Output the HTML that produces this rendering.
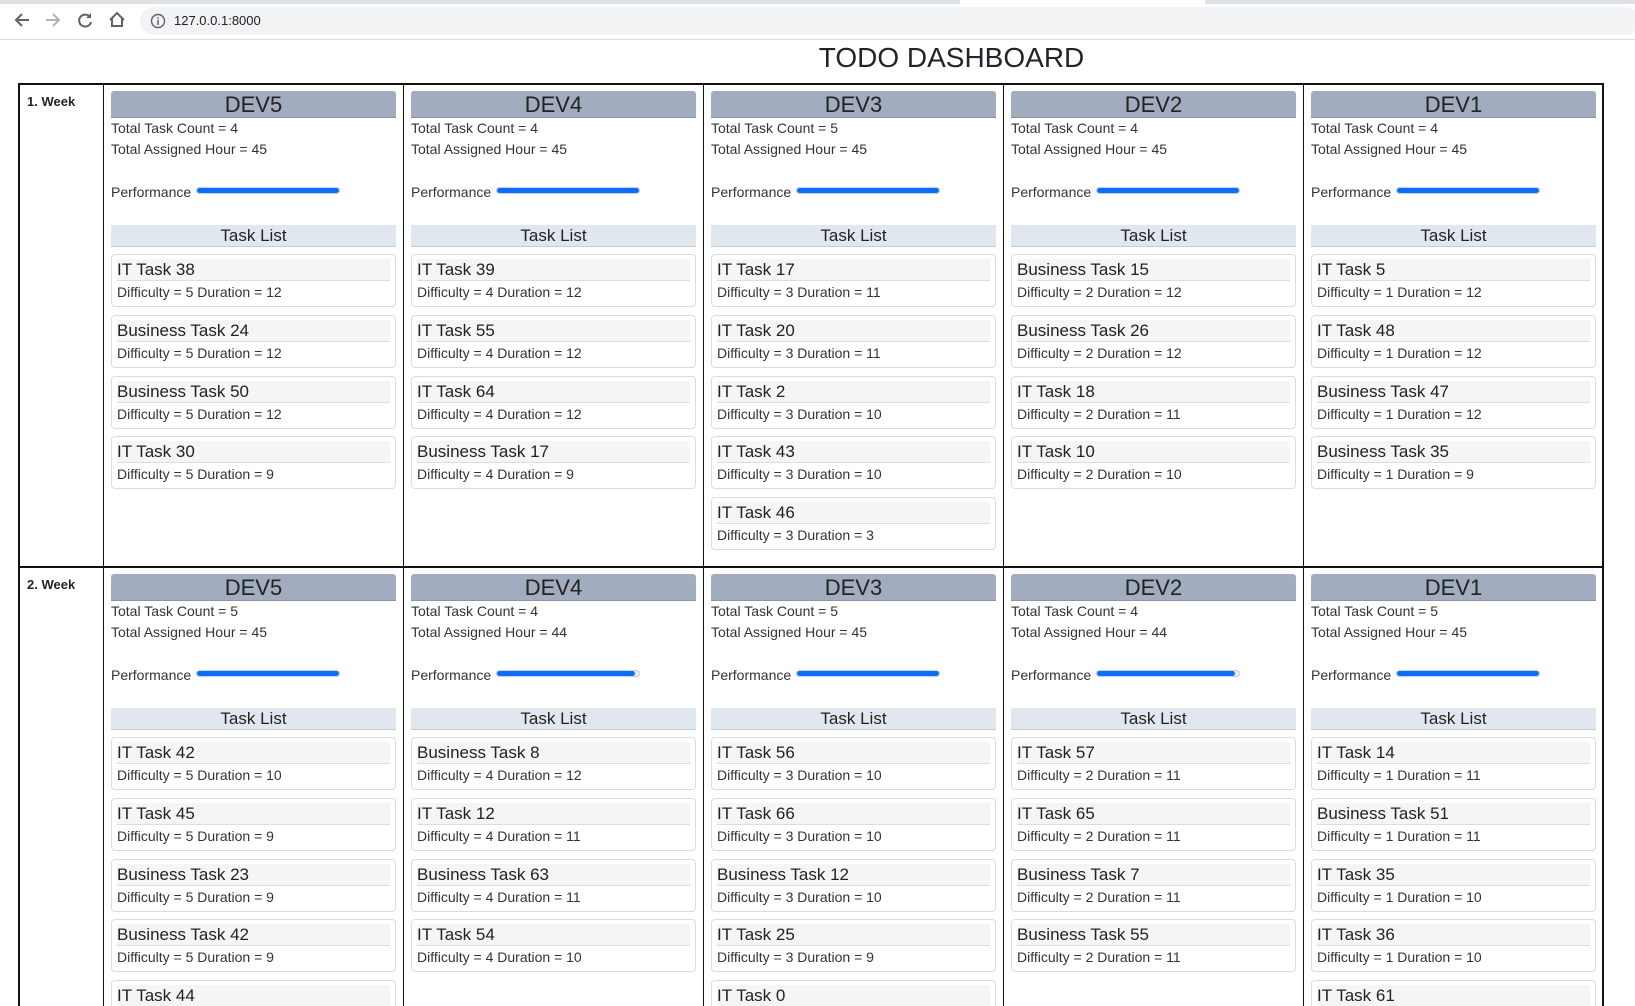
<!DOCTYPE html>
<html style="height:1006px;overflow:hidden"><head><meta charset="utf-8"><style>
*{box-sizing:border-box;margin:0;padding:0}
body{width:1635px;height:1006px;overflow:hidden;background:#fff;font-family:"Liberation Sans",sans-serif;color:#212529;position:relative}
.strip{position:absolute;left:0;top:0;width:1635px;height:4px;background:#dee1e6}
.tab{position:absolute;left:960px;top:0;width:245px;height:4px;background:#fff}
.bar{position:absolute;left:0;top:4px;width:1635px;height:36px;background:#fff;border-bottom:1px solid #dadce0}
.pill{position:absolute;left:140px;top:7px;width:1500px;height:28px;border-radius:14px;background:#f1f3f4}
.url{position:absolute;left:174px;top:13px;font-size:13px;color:#202124}
.ic{position:absolute;top:9px}
h1{position:absolute;left:0;width:1903px;top:42px;text-align:center;font-size:28px;font-weight:normal;color:#212529}
.tbl{position:absolute;left:18px;top:83px;width:1586px;height:930px;border:2px solid #111;border-bottom:none}
.vl{position:absolute;top:83px;width:1px;height:930px;background:#111}
.hl{position:absolute;left:18px;top:566px;width:1586px;height:2px;background:#111}
.wk{position:absolute;left:27px;font-size:13px;font-weight:bold}
.cell{position:absolute;width:285px}
.dh{height:27px;background:#a1adbe;border-radius:3px 3px 0 0;border-bottom:1px solid #8994a5;text-align:center;font-size:22px;line-height:28px;color:#222}
.st{font-size:14px;line-height:21px;color:#333}
.pf{margin-top:22px;height:20px;font-size:14px;line-height:20px;color:#333;position:relative}
.pb{position:absolute;left:85px;top:5px;width:144px;height:7px;border-radius:4px;background:#e9ecef;border:1px solid #c9d0dc}
.pb i{display:block;height:5px;background:#0d6efd;border-radius:3px;width:100%}
.tl{margin-top:23px;height:22px;background:#e1e7ef;border-bottom:1px solid #c5ccd6;text-align:center;font-size:17px;line-height:22px;color:#222}
.cards{margin-top:7px}
.cd{height:53px;border:1px solid #dcdcdc;border-radius:4px;padding:4px 5px 0;margin-bottom:7.75px}
.ct{height:22px;background:#f5f5f5;border-bottom:1px solid #ddd;font-size:17px;line-height:22px;color:#222}
.cdf{font-size:14px;line-height:23px;color:#333}
</style></head><body>
<div class="strip"></div><div class="tab"></div>
<div class="bar"></div>
<svg class="ic" style="left:12px" width="20" height="22" viewBox="0 0 20 22"><path d="M17 11H4M10 5l-6 6 6 6" stroke="#5f6368" stroke-width="2" fill="none"/></svg>
<svg class="ic" style="left:43px" width="20" height="22" viewBox="0 0 20 22"><path d="M3 11h13M10 5l6 6-6 6" stroke="#b0b3b8" stroke-width="2" fill="none"/></svg>
<svg class="ic" style="left:75px" width="20" height="22" viewBox="0 0 20 22"><path d="M15 8a6 6 0 1 0 1 5" stroke="#5f6368" stroke-width="2" fill="none"/><path d="M16 4v5h-5z" fill="#5f6368"/></svg>
<svg class="ic" style="left:107px" width="20" height="22" viewBox="0 0 20 22"><path d="M3 11l7-7 7 7M5 9v8h10V9" stroke="#5f6368" stroke-width="2" fill="none"/></svg>
<div class="pill"></div>
<svg class="ic" style="left:150px;top:13px" width="16" height="16" viewBox="0 0 16 16"><circle cx="8" cy="8" r="6.5" stroke="#5f6368" stroke-width="1.4" fill="none"/><path d="M8 7v5M8 4.5v1.5" stroke="#5f6368" stroke-width="1.5"/></svg>
<div class="url">127.0.0.1:8000</div>
<h1>TODO DASHBOARD</h1>
<div class="tbl"></div>
<div class="vl" style="left:103px"></div><div class="vl" style="left:403px"></div><div class="vl" style="left:703px"></div><div class="vl" style="left:1003px"></div><div class="vl" style="left:1303px"></div>
<div class="hl"></div>
<div class="wk" style="top:94px">1. Week</div>
<div class="wk" style="top:577px">2. Week</div>

<div class="cell" style="left:111px;top:91px"><div class="dh">DEV5</div><div class="st">Total Task Count = 4<br>Total Assigned Hour = 45</div><div class="pf">Performance<div class="pb"><i></i></div></div><div class="tl">Task List</div><div class="cards">
<div class="cd"><div class="ct">IT Task 38</div><div class="cdf">Difficulty = 5 Duration = 12</div></div>
<div class="cd"><div class="ct">Business Task 24</div><div class="cdf">Difficulty = 5 Duration = 12</div></div>
<div class="cd"><div class="ct">Business Task 50</div><div class="cdf">Difficulty = 5 Duration = 12</div></div>
<div class="cd"><div class="ct">IT Task 30</div><div class="cdf">Difficulty = 5 Duration = 9</div></div></div></div>

<div class="cell" style="left:411px;top:91px"><div class="dh">DEV4</div><div class="st">Total Task Count = 4<br>Total Assigned Hour = 45</div><div class="pf">Performance<div class="pb"><i></i></div></div><div class="tl">Task List</div><div class="cards">
<div class="cd"><div class="ct">IT Task 39</div><div class="cdf">Difficulty = 4 Duration = 12</div></div>
<div class="cd"><div class="ct">IT Task 55</div><div class="cdf">Difficulty = 4 Duration = 12</div></div>
<div class="cd"><div class="ct">IT Task 64</div><div class="cdf">Difficulty = 4 Duration = 12</div></div>
<div class="cd"><div class="ct">Business Task 17</div><div class="cdf">Difficulty = 4 Duration = 9</div></div></div></div>

<div class="cell" style="left:711px;top:91px"><div class="dh">DEV3</div><div class="st">Total Task Count = 5<br>Total Assigned Hour = 45</div><div class="pf">Performance<div class="pb"><i></i></div></div><div class="tl">Task List</div><div class="cards">
<div class="cd"><div class="ct">IT Task 17</div><div class="cdf">Difficulty = 3 Duration = 11</div></div>
<div class="cd"><div class="ct">IT Task 20</div><div class="cdf">Difficulty = 3 Duration = 11</div></div>
<div class="cd"><div class="ct">IT Task 2</div><div class="cdf">Difficulty = 3 Duration = 10</div></div>
<div class="cd"><div class="ct">IT Task 43</div><div class="cdf">Difficulty = 3 Duration = 10</div></div>
<div class="cd"><div class="ct">IT Task 46</div><div class="cdf">Difficulty = 3 Duration = 3</div></div></div></div>

<div class="cell" style="left:1011px;top:91px"><div class="dh">DEV2</div><div class="st">Total Task Count = 4<br>Total Assigned Hour = 45</div><div class="pf">Performance<div class="pb"><i></i></div></div><div class="tl">Task List</div><div class="cards">
<div class="cd"><div class="ct">Business Task 15</div><div class="cdf">Difficulty = 2 Duration = 12</div></div>
<div class="cd"><div class="ct">Business Task 26</div><div class="cdf">Difficulty = 2 Duration = 12</div></div>
<div class="cd"><div class="ct">IT Task 18</div><div class="cdf">Difficulty = 2 Duration = 11</div></div>
<div class="cd"><div class="ct">IT Task 10</div><div class="cdf">Difficulty = 2 Duration = 10</div></div></div></div>

<div class="cell" style="left:1311px;top:91px"><div class="dh">DEV1</div><div class="st">Total Task Count = 4<br>Total Assigned Hour = 45</div><div class="pf">Performance<div class="pb"><i></i></div></div><div class="tl">Task List</div><div class="cards">
<div class="cd"><div class="ct">IT Task 5</div><div class="cdf">Difficulty = 1 Duration = 12</div></div>
<div class="cd"><div class="ct">IT Task 48</div><div class="cdf">Difficulty = 1 Duration = 12</div></div>
<div class="cd"><div class="ct">Business Task 47</div><div class="cdf">Difficulty = 1 Duration = 12</div></div>
<div class="cd"><div class="ct">Business Task 35</div><div class="cdf">Difficulty = 1 Duration = 9</div></div></div></div>

<div class="cell" style="left:111px;top:574px"><div class="dh">DEV5</div><div class="st">Total Task Count = 5<br>Total Assigned Hour = 45</div><div class="pf">Performance<div class="pb"><i></i></div></div><div class="tl">Task List</div><div class="cards">
<div class="cd"><div class="ct">IT Task 42</div><div class="cdf">Difficulty = 5 Duration = 10</div></div>
<div class="cd"><div class="ct">IT Task 45</div><div class="cdf">Difficulty = 5 Duration = 9</div></div>
<div class="cd"><div class="ct">Business Task 23</div><div class="cdf">Difficulty = 5 Duration = 9</div></div>
<div class="cd"><div class="ct">Business Task 42</div><div class="cdf">Difficulty = 5 Duration = 9</div></div>
<div class="cd"><div class="ct">IT Task 44</div><div class="cdf">Difficulty = 5 Duration = 8</div></div></div></div>

<div class="cell" style="left:411px;top:574px"><div class="dh">DEV4</div><div class="st">Total Task Count = 4<br>Total Assigned Hour = 44</div><div class="pf">Performance<div class="pb"><i style="width:97%"></i></div></div><div class="tl">Task List</div><div class="cards">
<div class="cd"><div class="ct">Business Task 8</div><div class="cdf">Difficulty = 4 Duration = 12</div></div>
<div class="cd"><div class="ct">IT Task 12</div><div class="cdf">Difficulty = 4 Duration = 11</div></div>
<div class="cd"><div class="ct">Business Task 63</div><div class="cdf">Difficulty = 4 Duration = 11</div></div>
<div class="cd"><div class="ct">IT Task 54</div><div class="cdf">Difficulty = 4 Duration = 10</div></div></div></div>

<div class="cell" style="left:711px;top:574px"><div class="dh">DEV3</div><div class="st">Total Task Count = 5<br>Total Assigned Hour = 45</div><div class="pf">Performance<div class="pb"><i></i></div></div><div class="tl">Task List</div><div class="cards">
<div class="cd"><div class="ct">IT Task 56</div><div class="cdf">Difficulty = 3 Duration = 10</div></div>
<div class="cd"><div class="ct">IT Task 66</div><div class="cdf">Difficulty = 3 Duration = 10</div></div>
<div class="cd"><div class="ct">Business Task 12</div><div class="cdf">Difficulty = 3 Duration = 10</div></div>
<div class="cd"><div class="ct">IT Task 25</div><div class="cdf">Difficulty = 3 Duration = 9</div></div>
<div class="cd"><div class="ct">IT Task 0</div><div class="cdf">Difficulty = 3 Duration = 6</div></div></div></div>

<div class="cell" style="left:1011px;top:574px"><div class="dh">DEV2</div><div class="st">Total Task Count = 4<br>Total Assigned Hour = 44</div><div class="pf">Performance<div class="pb"><i style="width:97%"></i></div></div><div class="tl">Task List</div><div class="cards">
<div class="cd"><div class="ct">IT Task 57</div><div class="cdf">Difficulty = 2 Duration = 11</div></div>
<div class="cd"><div class="ct">IT Task 65</div><div class="cdf">Difficulty = 2 Duration = 11</div></div>
<div class="cd"><div class="ct">Business Task 7</div><div class="cdf">Difficulty = 2 Duration = 11</div></div>
<div class="cd"><div class="ct">Business Task 55</div><div class="cdf">Difficulty = 2 Duration = 11</div></div></div></div>

<div class="cell" style="left:1311px;top:574px"><div class="dh">DEV1</div><div class="st">Total Task Count = 5<br>Total Assigned Hour = 45</div><div class="pf">Performance<div class="pb"><i></i></div></div><div class="tl">Task List</div><div class="cards">
<div class="cd"><div class="ct">IT Task 14</div><div class="cdf">Difficulty = 1 Duration = 11</div></div>
<div class="cd"><div class="ct">Business Task 51</div><div class="cdf">Difficulty = 1 Duration = 11</div></div>
<div class="cd"><div class="ct">IT Task 35</div><div class="cdf">Difficulty = 1 Duration = 10</div></div>
<div class="cd"><div class="ct">IT Task 36</div><div class="cdf">Difficulty = 1 Duration = 10</div></div>
<div class="cd"><div class="ct">IT Task 61</div><div class="cdf">Difficulty = 1 Duration = 3</div></div></div></div>
</body></html>
